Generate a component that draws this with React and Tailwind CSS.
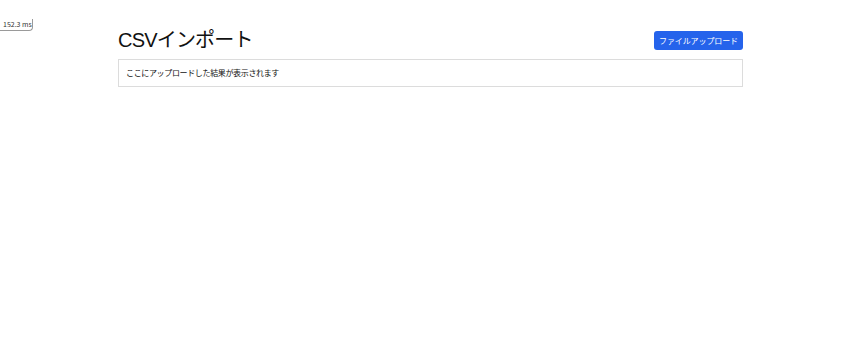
import React from "react";

const App = () => {
  return (
    <div
      className="relative min-h-[350px] bg-white text-[#111]"
      style={{ fontFamily: '"Noto Sans CJK JP", "Liberation Sans", sans-serif' }}
    >
      {/* timing badge */}
      <div className="absolute left-0 top-[19px] h-[12px] w-[33px] rounded-br-[4px] border-b border-r border-[#9a9a9a] bg-white pl-[3px] text-[7px] leading-[11px] text-[#333]">
        152.3 ms
      </div>

      <div className="ml-[118px] w-[625px] pt-[26px]">
        <div className="flex items-center justify-between">
          <h1
            className="text-[20px] leading-[28px] font-normal tracking-[-0.8px]"
            style={{ fontFamily: '"Liberation Sans", "Noto Sans CJK JP", sans-serif' }}
          >
            CSVインポート
          </h1>
          <button className="mt-[1px] h-[19px] w-[89px] rounded-[3px] bg-[#2563eb] text-[8px] tracking-[-0.1px] text-white">
            ファイルアップロード
          </button>
        </div>
        <div className="mt-[5px] flex h-[28px] items-center border border-[#dcdcdc] px-[7px] text-[8px] tracking-[-0.35px]">
          ここにアップロードした結果が表示されます
        </div>
      </div>
    </div>
  );
};

export default App;
